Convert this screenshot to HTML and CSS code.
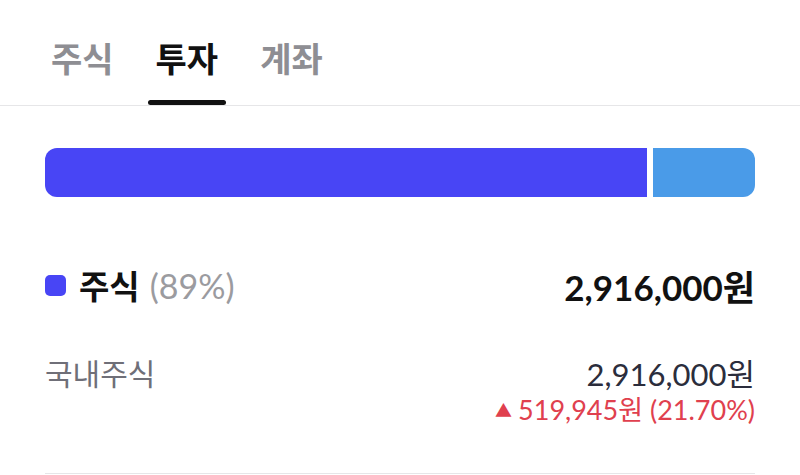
FILE: index.html
```html
<!DOCTYPE html>
<html lang="ko">
<head>
    <meta charset="UTF-8">
    <meta name="viewport" content="width=device-width, initial-scale=1.0">
    <title>투자</title>
    <link rel="stylesheet" href="styles.css">
</head>
<body>
    <div class="tabs">
        <div class="tab">주식</div>
        <div class="tab active">투자</div>
        <div class="tab">계좌</div>
    </div>

    <div class="content">
        <!-- 비중 막대 -->
        <div class="bar">
            <div class="bar-part stock" style="flex: 602"></div>
            <div class="bar-part etc" style="flex: 102"></div>
        </div>

        <div class="row main">
            <div class="label">
                <span class="dot"></span>
                <span class="name">주식</span>
                <span class="pct">(89%)</span>
            </div>
            <div class="amount">2,916,000원</div>
        </div>

        <div class="row sub">
            <div class="sub-name">국내주식</div>
            <div class="sub-values">
                <div class="sub-amount">2,916,000원</div>
                <div class="profit"><span class="arrow">▲</span>519,945원 (21.70%)</div>
            </div>
        </div>

        <div class="divider"></div>
    </div>
</body>
</html>
```

FILE: styles.css
```css
body {
    margin: 0;
    background: #fff;
    font-family: Lato, "Noto Sans CJK KR", sans-serif;
    color: #111;
    width: 800px;
    height: 475px;
    overflow: hidden;
}

/* 탭 */
.tabs {
    display: flex;
    gap: 26px;
    padding: 0 0 0 43px;
    border-bottom: 1px solid #e6e6e8;
    height: 106px;
    box-sizing: border-box;
}
.tab {
    font-size: 34px;
    line-height: 40px;
    font-weight: 700;
    color: #8e8e93;
    padding: 39px 8px 0 8px;
    position: relative;
    height: 100%;
    box-sizing: border-box;
}
.tab.active { color: #111; }
.tab.active::after {
    content: "";
    position: absolute;
    left: 0; right: 0; bottom: 0;
    height: 5px;
    border-radius: 3px;
    background: #111;
}

.content {
    padding: 42px 45px 0 45px;
}

/* 비중 막대 */
.bar {
    display: flex;
    gap: 6px;
    height: 49px;
}
.bar-part { height: 100%; }
.stock {
    background: #4845f5;
    border-radius: 12px 0 0 12px;
}
.etc {
    background: #4a9be8;
    border-radius: 0 12px 12px 0;
}

.row {
    display: flex;
    justify-content: space-between;
}
.row.main {
    align-items: center;
    height: 40px;
    margin-top: 68px;
}
.label {
    display: flex;
    align-items: center;
}
.dot {
    width: 21px;
    height: 21px;
    border-radius: 5px;
    background: #4845f5;
    margin-right: 13px;
}
.name {
    font-size: 33px;
    font-weight: 700;
    color: #111;
}
.pct {
    font-size: 34px;
    color: #9b9b9f;
    margin-left: 10px;
}
.amount {
    font-size: 35px;
    font-weight: 700;
    color: #111;
}

.row.sub {
    margin-top: 51px;
}
.sub-name {
    font-size: 30px;
    line-height: 34px;
    color: #6f6f78;
}
.sub-values { text-align: right; }
.sub-amount {
    font-size: 31px;
    line-height: 36px;
    color: #2b2d3c;
}
.profit {
    font-size: 27px;
    line-height: 30px;
    color: #e0404e;
    margin-top: 3px;
}
.arrow {
    font-size: 17px;
    margin-right: 6px;
    vertical-align: 3px;
}

.divider {
    margin-top: 47px;
    border-top: 1px solid #e6e6e8;
}
```
